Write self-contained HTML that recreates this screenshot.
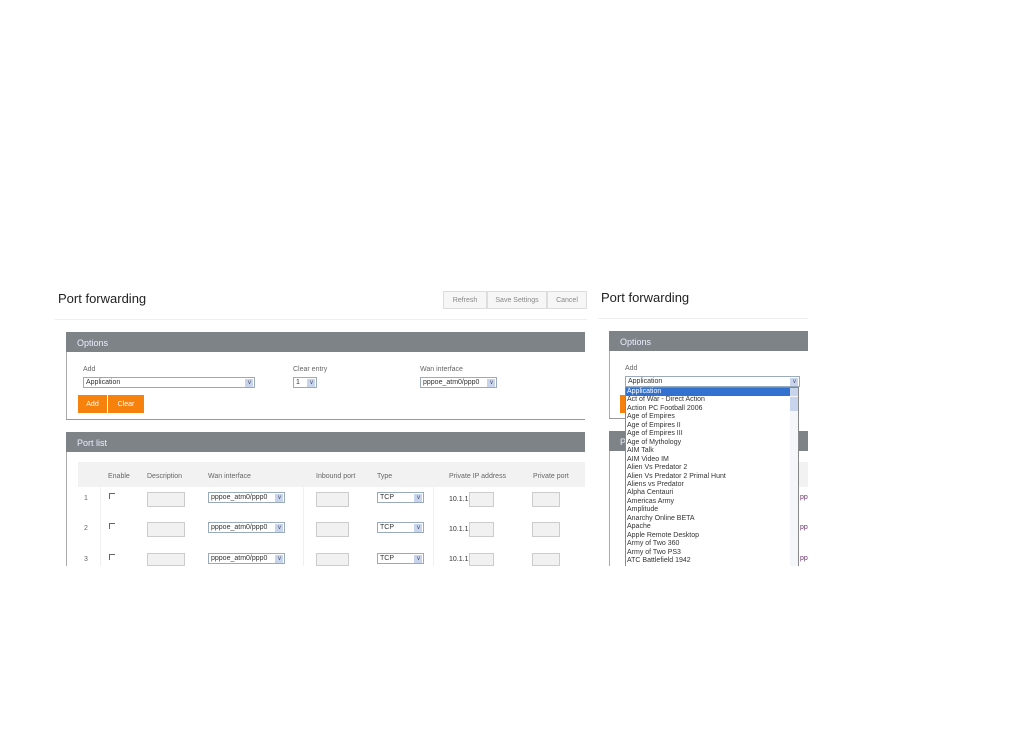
<!DOCTYPE html>
<html><head><meta charset="utf-8"><style>
*{margin:0;padding:0;box-sizing:border-box}
body{width:1020px;height:737px;background:#fff;position:relative;overflow:hidden;font-family:"Liberation Sans",sans-serif;color:#555}
.a{position:absolute;white-space:nowrap}
.t{font-size:13px;color:#222}
.s{font-size:7px;color:#666}
.bar{background:#7d8387;color:#eef;font-size:9px;padding:6px 0 0 11px}
.btn{border:1px solid #ddd;background:#f6f6f6;font-size:7px;color:#888;text-align:center;line-height:17px}
.sel{border:1px solid #9ab;background:#fff;font-size:7px;color:#333;line-height:10px;padding-left:2px}
.sel:after{content:"";position:absolute;right:1px;top:1px;width:8px;height:8px;background:#c8d4ec}
.sel i{position:absolute;right:3px;top:0;font-style:normal;font-size:6px;color:#446;z-index:1}
.in{border:1px solid #ccc;background:#f1f1f1}
.cb{width:6px;height:6px;border-left:1px solid #666;border-top:1px solid #666}
.or{background:#f6820d;color:#fff;font-size:7px;text-align:center;line-height:19px}
.li{font-size:7px;color:#333;line-height:8.45px}
.pp{font-size:7px;color:#636}
</style></head><body>
<!-- LEFT -->
<div class="a t" style="left:58px;top:291px">Port forwarding</div>
<div class="a btn" style="left:443px;top:291px;width:44px;height:18px">Refresh</div>
<div class="a btn" style="left:487px;top:291px;width:60px;height:18px">Save Settings</div>
<div class="a btn" style="left:547px;top:291px;width:40px;height:18px">Cancel</div>
<div class="a" style="left:55px;top:319px;width:532px;height:1px;background:#eee"></div>
<div class="a bar" style="left:66px;top:332px;width:519px;height:20px">Options</div>
<div class="a" style="left:66px;top:352px;width:1px;height:68px;background:#aaa"></div>
<div class="a" style="left:66px;top:419px;width:519px;height:1px;background:#999"></div>
<div class="a s" style="left:83px;top:366px">Add</div>
<div class="a sel" style="left:83px;top:377px;width:172px;height:11px">Application<i>v</i></div>
<div class="a s" style="left:293px;top:366px">Clear entry</div>
<div class="a sel" style="left:293px;top:377px;width:24px;height:11px">1<i>v</i></div>
<div class="a s" style="left:420px;top:366px">Wan interface</div>
<div class="a sel" style="left:420px;top:377px;width:77px;height:11px">pppoe_atm0/ppp0<i>v</i></div>
<div class="a or" style="left:78px;top:395px;width:29px;height:18px">Add</div>
<div class="a or" style="left:108px;top:395px;width:36px;height:18px">Clear</div>
<div class="a bar" style="left:66px;top:432px;width:519px;height:20px">Port list</div>
<div class="a" style="left:66px;top:452px;width:1px;height:114px;background:#aaa"></div>
<div class="a" style="left:78px;top:462px;width:507px;height:25px;background:#f2f2f2"></div>
<div class="a s" style="left:108px;top:473px">Enable</div>
<div class="a s" style="left:147px;top:473px">Description</div>
<div class="a s" style="left:208px;top:473px">Wan interface</div>
<div class="a s" style="left:316px;top:473px">Inbound port</div>
<div class="a s" style="left:377px;top:473px">Type</div>
<div class="a s" style="left:449px;top:473px">Private IP address</div>
<div class="a s" style="left:533px;top:473px">Private port</div>
<div class="a" style="left:100px;top:487px;width:1px;height:79px;background:#f0f0f0"></div>
<div class="a" style="left:303px;top:487px;width:1px;height:79px;background:#f0f0f0"></div>
<div class="a" style="left:433px;top:487px;width:1px;height:79px;background:#f0f0f0"></div>

<div class="a s" style="left:84px;top:495px">1</div>
<div class="a cb" style="left:109px;top:493px"></div>
<div class="a in" style="left:147px;top:492px;width:38px;height:15px"></div>
<div class="a sel" style="left:208px;top:492px;width:77px;height:11px">pppoe_atm0/ppp0<i>v</i></div>
<div class="a in" style="left:316px;top:492px;width:33px;height:15px"></div>
<div class="a sel" style="left:377px;top:492px;width:47px;height:11px">TCP<i>v</i></div>
<div class="a s" style="left:449px;top:496px;color:#333">10.1.1.</div>
<div class="a in" style="left:469px;top:492px;width:25px;height:15px"></div>
<div class="a in" style="left:532px;top:492px;width:28px;height:15px"></div>

<div class="a s" style="left:84px;top:525px">2</div>
<div class="a cb" style="left:109px;top:523px"></div>
<div class="a in" style="left:147px;top:522px;width:38px;height:15px"></div>
<div class="a sel" style="left:208px;top:522px;width:77px;height:11px">pppoe_atm0/ppp0<i>v</i></div>
<div class="a in" style="left:316px;top:522px;width:33px;height:15px"></div>
<div class="a sel" style="left:377px;top:522px;width:47px;height:11px">TCP<i>v</i></div>
<div class="a s" style="left:449px;top:526px;color:#333">10.1.1.</div>
<div class="a in" style="left:469px;top:522px;width:25px;height:15px"></div>
<div class="a in" style="left:532px;top:522px;width:28px;height:15px"></div>

<div class="a s" style="left:84px;top:556px">3</div>
<div class="a cb" style="left:109px;top:554px"></div>
<div class="a in" style="left:147px;top:553px;width:38px;height:13px"></div>
<div class="a sel" style="left:208px;top:553px;width:77px;height:11px">pppoe_atm0/ppp0<i>v</i></div>
<div class="a in" style="left:316px;top:553px;width:33px;height:13px"></div>
<div class="a sel" style="left:377px;top:553px;width:47px;height:11px">TCP<i>v</i></div>
<div class="a s" style="left:449px;top:556px;color:#333">10.1.1.</div>
<div class="a in" style="left:469px;top:553px;width:25px;height:13px"></div>
<div class="a in" style="left:532px;top:553px;width:28px;height:13px"></div>

<!-- RIGHT -->
<div class="a t" style="left:601px;top:290px">Port forwarding</div>
<div class="a" style="left:598px;top:318px;width:210px;height:1px;background:#eee"></div>
<div class="a bar" style="left:609px;top:331px;width:199px;height:20px">Options</div>
<div class="a" style="left:609px;top:351px;width:1px;height:68px;background:#aaa"></div>
<div class="a" style="left:609px;top:418px;width:16px;height:1px;background:#999"></div>
<div class="a or" style="left:620px;top:395px;width:5px;height:18px"></div>
<div class="a bar" style="left:609px;top:431px;width:199px;height:20px">P</div>
<div class="a" style="left:609px;top:451px;width:1px;height:115px;background:#aaa"></div>
<div class="a" style="left:798px;top:462px;width:10px;height:25px;background:#f2f2f2"></div>
<div class="a pp" style="left:800px;top:494px">pp</div>
<div class="a pp" style="left:800px;top:524px">pp</div>
<div class="a pp" style="left:800px;top:555px">pp</div>
<div class="a s" style="left:625px;top:365px">Add</div>
<div class="a sel" style="left:625px;top:376px;width:175px;height:11px">Application<i>v</i></div>
<div class="a" style="left:625px;top:387px;width:174px;height:179px;background:#fff;border:1px solid #888;border-bottom:none"></div>
<div class="a" style="left:790px;top:388px;width:8px;height:178px;background:#f4f6fa"></div>
<div class="a" style="left:790px;top:388px;width:8px;height:8px;background:#c8d4ec"></div>
<div class="a" style="left:790px;top:397px;width:8px;height:14px;background:#c8d4ec"></div>
<div class="a" style="left:626px;top:388px;width:164px;height:8px;background:#3371d0"></div>
<div class="a li" style="left:627px;top:388px">
<div style="color:#fff">Application</div>
<div>Act of War - Direct Action</div>
<div>Action PC Football 2006</div>
<div>Age of Empires</div>
<div>Age of Empires II</div>
<div>Age of Empires III</div>
<div>Age of Mythology</div>
<div>AIM Talk</div>
<div>AIM Video IM</div>
<div>Alien Vs Predator 2</div>
<div>Alien Vs Predator 2 Primal Hunt</div>
<div>Aliens vs Predator</div>
<div>Alpha Centauri</div>
<div>Americas Army</div>
<div>Amplitude</div>
<div>Anarchy Online BETA</div>
<div>Apache</div>
<div>Apple Remote Desktop</div>
<div>Army of Two 360</div>
<div>Army of Two PS3</div>
<div>ATC Battlefield 1942</div>
</div>
</body></html>
